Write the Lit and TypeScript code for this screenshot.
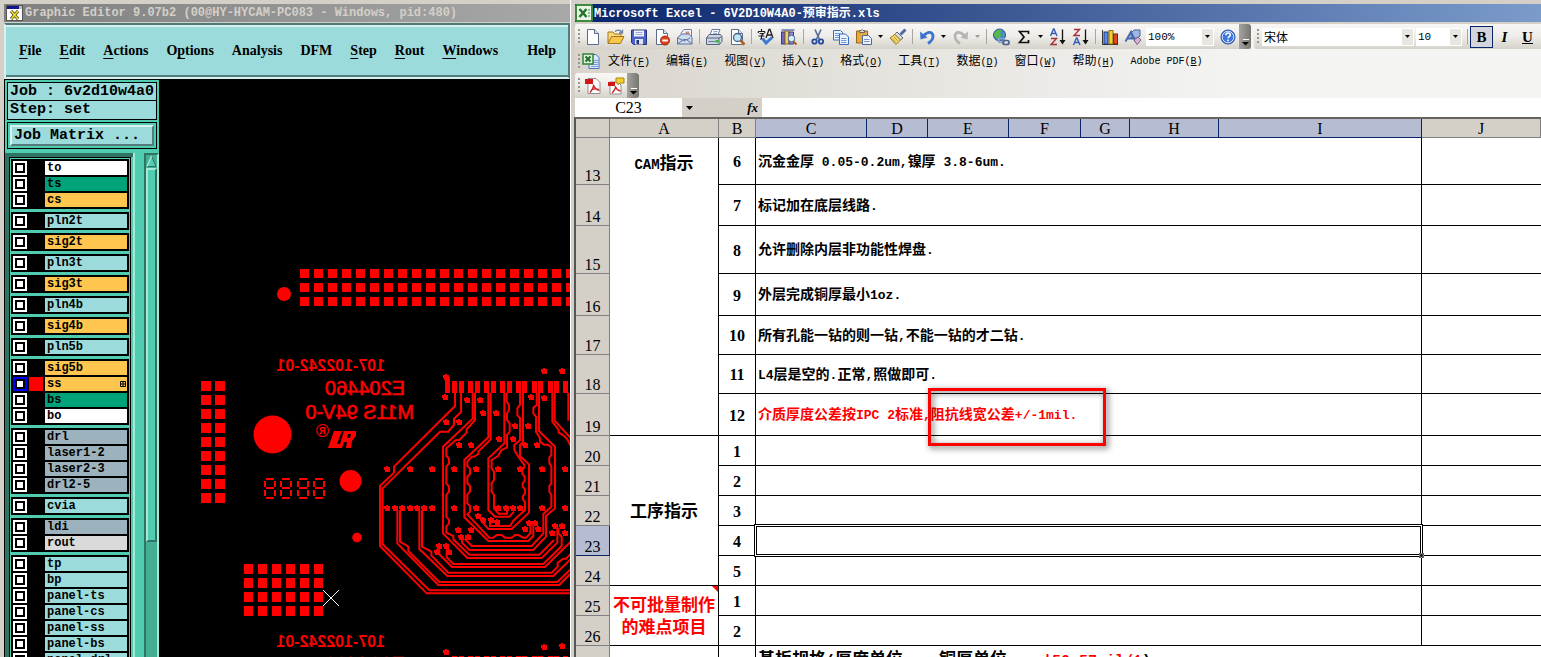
import { LitElement, html, svg, css } from "lit";
import { customElement } from "lit/decorators.js";
import { classMap } from "lit/directives/class-map.js";

/* Splits a string into CJK and Latin runs so each gets its own face and size. */
const mix = (text: string) =>
  (text.match(/[\u3000-\u9fff]+|[^\u3000-\u9fff]+/g) ?? []).map((run) =>
    /[\u3000-\u9fff]/.test(run)
      ? html`<span class="cj">${run}</span>`
      : html`<span class="la">${run}</span>`
  );

const icon = (body: unknown, size = 18) =>
  html`<svg width=${size} height=${size} viewBox="0 0 18 18" aria-hidden="true">${body}</svg>`;

const sheet = svg`<path d="M3.500 1.500h7l4 4v11h-11z" fill="#fff" stroke="#5b6b8c"/><path d="M10.500 1.500v4h4" fill="#dbe5f5" stroke="#5b6b8c"/>`;
const lens = svg`<path d="M12.500 12.500l4 4" stroke="#b0601c" stroke-width="2.500"/><circle cx="9.500" cy="9.500" r="4" fill="#bfe6f5" stroke="#4a6484" stroke-width="1.300"/>`;

const icons: Record<string, unknown> = {
  new: sheet,
  open: svg`<path d="M1 15V4h5l1.500 2H14v3" fill="#f9dc7a" stroke="#a5761c"/><path d="M1 15.500L4.500 8.500H17L13.500 15.500z" fill="#f7c64a" stroke="#a5761c"/><path d="M8 3.500q4-3 7 1M15.500 1.500v3.500h-3.500" fill="none" stroke="#6d7fa0" stroke-width="1.300"/>`,
  save: svg`<path d="M1.500 2h15v14.500h-13l-2-2z" fill="#4b62c8" stroke="#26317c"/><rect x="4" y="2.500" width="10" height="6" fill="#f2f4fb"/><path d="M5.500 4.500h7M5.500 6.500h7" stroke="#9aa9d8"/><rect x="5" y="11" width="8" height="5.500" fill="#dfe3ef"/><rect x="6.500" y="12" width="2.500" height="4" fill="#26317c"/>`,
  deny: svg`${sheet}<circle cx="12" cy="12.500" r="4.500" fill="#d8431f" stroke="#a52a10"/><rect x="9.300" y="11.500" width="5.500" height="2" fill="#fff"/>`,
  mail: svg`<path d="M4.500 6L8 1.500h7.500V10" fill="#f5f8ff" stroke="#6b7fa6"/><path d="M9.500 3.500h4v4h-4z" fill="#e08a70"/><path d="M1.500 9.500L6 6h7l3 3.500v6.500h-14.500z" fill="#cfdcf0" stroke="#5d74a0"/><path d="M1.500 16l6-4.500h3l5.500 4.500M2 10l6 3 6-3" fill="none" stroke="#5d74a0"/>`,
  print: svg`<path d="M5 7L7 1.500h8L13 7" fill="#fff" stroke="#66789c"/><path d="M8.500 3.500h4M8 5.300h4" stroke="#8fa0bf"/><path d="M1.500 10L4 6.500h11.500l1.500 2v5l-2.500 3h-13z" fill="#cdd5e2" stroke="#56657f"/><path d="M1.500 10h12.500l3-1.500M14 10v6" stroke="#56657f" fill="none"/><path d="M3.500 13.500h6.500" stroke="#6a7a93"/><rect x="10.500" y="12" width="3" height="2.500" fill="#27c02c"/>`,
  preview: svg`${sheet}${lens}`,
  spell: svg`<path d="M1 3.500h7M4.500 1v2M1.300 3.500V5M7.800 3.500V5M2.500 5.500h4L4.500 7.500V11H3M1.500 8h6" fill="none" stroke="#202020" stroke-width="1.200"/><path d="M9 10l3-8.500h1L16 10M10 7h5" fill="none" stroke="#202020" stroke-width="1.300"/><path d="M5.500 10.500l3.500 4.500 6-5.500" fill="none" stroke="#3b78d8" stroke-width="3"/>`,
  research: svg`<rect x="1.500" y="4" width="3.500" height="12" fill="#6d67c8" stroke="#3a3889"/><rect x="5" y="3" width="4" height="13" fill="#f2d165" stroke="#8c6d1e"/><path d="M9 4h4.500v12H9z" fill="#8e8fd8" stroke="#3a3889"/><path d="M1.500 2h13" stroke="#6775b5" stroke-width="1.500"/><path d="M13.500 13.500l3 3" stroke="#b0601c" stroke-width="2.200"/><circle cx="11.500" cy="10.500" r="3.300" fill="#d8effa" stroke="#4a6484"/>`,
  cut: svg`<path d="M6 1.500l4.500 10M12 1.500L7.500 11.500" stroke="#5b7196" stroke-width="1.700"/><circle cx="5.500" cy="13.500" r="2.200" fill="none" stroke="#24499c" stroke-width="1.800"/><circle cx="12" cy="13.500" r="2.200" fill="none" stroke="#24499c" stroke-width="1.800"/>`,
  copy: svg`<path d="M1.500 2.500h7l2 2V12h-9z" fill="#eaf3fd" stroke="#3d6cb4"/><path d="M3 5.500h5M3 7.500h5M3 9.500h5" stroke="#6c9ad8"/><path d="M7.500 6h6l3 3v7.500h-9z" fill="#eaf3fd" stroke="#3d6cb4"/><path d="M9 10.500h5.500M9 12.500h5.500M9 14.500h5.500" stroke="#6c9ad8"/>`,
  paste: svg`<path d="M1.500 3h11v12h-11z" fill="#e8a93c" stroke="#94651a"/><path d="M4.500 4.500V2.500h1.500q1-2 2 0h1.500v2z" fill="#d8d8d8" stroke="#666"/><path d="M7.500 7.500h6l3 3v6h-9z" fill="#eef3fb" stroke="#50669a"/><path d="M9 11.500h5.500M9 13.500h5.500" stroke="#7d95c5"/>`,
  painter: svg`<path d="M16.500 1.500l-5 5" stroke="#4e6aa8" stroke-width="3"/><path d="M8 4l6 6-2.500 2-6-5.500z" fill="#d6dbe8" stroke="#6d6d6d"/><path d="M6 6.500l5.500 5.500L7 16.500 1 10z" fill="#f6dc73" stroke="#9a7a23"/><path d="M3 10.500l4 4M5 9l4 4" stroke="#b59330"/>`,
  undo: svg`<path d="M5 8Q13 1 15 7.500 15.500 12 10 15.500" fill="none" stroke="#3e72cf" stroke-width="2.800"/><path d="M2 3.500l.5 8 7-2z" fill="#3e72cf"/>`,
  redo: svg`<path d="M13 8Q5 1 3 7.500 2.500 12 8 15.500" fill="none" stroke="#b5b5b5" stroke-width="2.800"/><path d="M16 3.500l-.5 8-7-2z" fill="#b5b5b5"/>`,
  link: svg`<circle cx="7.500" cy="7" r="6" fill="#3f86d0" stroke="#2c5796"/><path d="M3 4q3-3 6-2 1 2-1 3 2 2 0 4-2 3-3 2-1-3-3-3 0-3 1-4zM11 4q2 2 1.500 5l-2-2z" fill="#59b947"/><rect x="6.500" y="10.500" width="6" height="4" rx="2" fill="none" stroke="#90a5cb" stroke-width="1.700"/><rect x="11" y="12.500" width="6" height="4" rx="2" fill="none" stroke="#48628f" stroke-width="1.700"/>`,
  sum: svg`<path d="M13.500 6V3.500H4.500L9 9l-4.500 5.500h9V12" fill="none" stroke="#111" stroke-width="1.700"/>`,
  az: svg`<path d="M1.500 8L4.500 1h.5L8 8M2.500 5.500h4.500" fill="none" stroke="#355fb5" stroke-width="1.400"/><path d="M2 10.500h5.500L2 16.500h6" fill="none" stroke="#a5303a" stroke-width="1.400"/><path d="M13.500 1.500v13" stroke="#111" stroke-width="1.300"/><path d="M10.500 12h6l-3 4.500z" fill="#111"/>`,
  za: svg`<path d="M2 1.500h5.500L2 7.500h6" fill="none" stroke="#a5303a" stroke-width="1.400"/><path d="M1.500 17l3-7H5l3 7M2.500 14.500h4.500" fill="none" stroke="#355fb5" stroke-width="1.400"/><path d="M13.500 1.500v13" stroke="#111" stroke-width="1.300"/><path d="M10.500 12h6l-3 4.500z" fill="#111"/>`,
  chart: svg`<path d="M1.500 2v14.500H17" fill="none" stroke="#333"/><rect x="3" y="4" width="4" height="12" fill="#5b8be6" stroke="#1d377c"/><rect x="8" y="2.500" width="4" height="13.500" fill="#f4d02e" stroke="#8b7112"/><rect x="12.500" y="6" width="4" height="10" fill="#d94a27" stroke="#7d220d"/>`,
  draw: svg`<path d="M7 5l3-3h6v6l-3 2H7z" fill="#9fb9e4" stroke="#47639c"/><path d="M1.500 13.500L7 4l4.500 9.500M3.500 10.500H10" fill="none" stroke="#4668ae" stroke-width="2"/><path d="M10 12l4-3 3 3-4 4.500z" fill="#d6b4d4" stroke="#7b5a8d"/>`,
  help: svg`<circle cx="9" cy="9" r="7" fill="#3c77dd" stroke="#1c4aa3"/><circle cx="9" cy="9" r="5.800" fill="none" stroke="#d7e6ff"/><path d="M6.800 7.300q0-2.300 2.300-2.300 2.200 0 2.200 1.900 0 1-1.200 1.700-1 .6-1 1.600M9.100 11.500v1.700" fill="none" stroke="#fff" stroke-width="1.600"/>`,
  pdf: svg`<path d="M4 1.500h8l4 4v11H4z" fill="#fff" stroke="#8f8f8f"/><rect x="1" y="2" width="8" height="5" fill="#d21616"/><path d="M6 15.500q4-5 3.500-8M9.500 8q1 4 6 5.500M7 13q4-2 8-.5" fill="none" stroke="#c22" stroke-width="1.300"/>`,
  pdfmail: svg`<path d="M3 5h8l3 3v9H3z" fill="#fff" stroke="#8f8f8f"/><rect x="1" y="5" width="7" height="4" fill="#d21616"/><path d="M5 16q4-4 3.500-7M8.500 10q1 3 5 4" fill="none" stroke="#c22" stroke-width="1.300"/><path d="M9 1h8v5h-4l-2 2V6H9z" fill="#f6ce2c" stroke="#a8861a"/>`,
  excel: svg`<rect x="1" y="1" width="16" height="16" rx="1" fill="#e9f4e4" stroke="#3f8a3c" stroke-width="2"/><path d="M4.500 5l7 8M11.500 5l-7 8" stroke="#20732a" stroke-width="2.500"/><path d="M13 6h2M13 9h2M13 12h2" stroke="#3f8a3c"/>`,
  book: svg`<path d="M7 2.500h7l3 3v11H7z" fill="#dce9fb" stroke="#4c70b2"/><path d="M11 8.500h5M11 10.500h5M9 12.500h7M9 14.500h7" stroke="#7c9cd6"/><rect x="1" y="2" width="10" height="10" fill="#dff0da" stroke="#2f8437" stroke-width="1.500"/><path d="M3.500 4.500l5 5M8.500 4.500l-5 5" stroke="#1c7029" stroke-width="2"/>`,
  xwin: svg`<rect x="0.500" y="1.500" width="16" height="15" fill="#fff" stroke="#555"/><rect x="1" y="2" width="15" height="3" fill="#14148c"/><rect x="13" y="2" width="3" height="3" fill="#bbb"/><path d="M5 7l7 8M12 7l-7 8" stroke="#3c3c20" stroke-width="3"/><path d="M5 7l7 8M12 7l-7 8" stroke="#f1e221" stroke-width="1.700"/>`,
};

const layerGroups: [string, string][][] = [
  [["to", "white"], ["ts", "green"], ["cs", "gold"]],
  [["pln2t", "cyan"]],
  [["sig2t", "gold"]],
  [["pln3t", "cyan"]],
  [["sig3t", "gold"]],
  [["pln4b", "cyan"]],
  [["sig4b", "gold"]],
  [["pln5b", "cyan"]],
  [["sig5b", "gold"], ["ss", "gold"], ["bs", "green"], ["bo", "white"]],
  [["drl", "slate"], ["laser1-2", "slate"], ["laser2-3", "slate"], ["drl2-5", "slate"]],
  [["cvia", "cyan"]],
  [["ldi", "slate"], ["rout", "grey"]],
  [["tp", "cyan"], ["bp", "cyan"], ["panel-ts", "cyan"], ["panel-cs", "cyan"], ["panel-ss", "cyan"], ["panel-bs", "cyan"], ["panel-drl", "cyan"]],
];

const range = (n: number) => Array.from({ length: n }, (_, i) => i);

/* Board artwork: trace geometry is in thirds of a pixel. */
const traces = [
  "M255 128V168L72 350V368L30 408V588L170 730H600",
  "M273 128V186L252 206V225L234 245H210L38 415V583L178 721H600",
  "M82 480V580L205 705H568L600 672",
  "M90 480V575L115 590V603L208 696H562L602 658",
  "M148 480V597L232 678H550L602 628",
  "M156 480V590L184 605V616L235 668H545L563 650V638L580 626H588L602 612",
  "M208 590V613L246 651H525L602 575",
  "M230 590V622L250 642H520L575 588V560L565 550V535",
  "M308 128V206L219 290V550L292 624H515L562 578V530",
  "M315 128V210L290 238V248L268 270H258L240 285L229 295V318L237 326V340L229 350V400L237 410V425L229 435V500L237 510V520L229 530V548L250 558V568L298 614H508L552 570",
  "M355 128V262L283 330V502L355 573H475L490 558V522",
  "M362 128V268L325 305V312L312 320H305L292 335V348L300 355V372L292 380V400L300 408V425L292 433V460L300 468V485L292 493L358 563H370L380 555H395L405 563H425L435 555H445L460 563H468L481 550V522",
  "M403 128V280L355 325V480L375 500H418L432 485",
  "M410 128V155L417 165V180L411 190V210L419 220V245L411 255V292L395 300L384 318L365 330V355L372 365V390L365 400V425L372 435V475L386 491H411V478",
  "M450 128V165L442 175V195L450 205V270L433 285V300L445 320L463 345V352L457 360V372L464 380V392L458 400V410L465 418V430L459 438V448L465 456V480L430 512L420 528H360V516",
  "M459 128V275L450 285V318L477 343V488L425 537H355L332 510",
  "M500 128V165L490 173V190L498 200V245L510 265V275L522 284H534L544 292V315L538 322V340L544 348V400L538 408V425L544 435V470L520 492V550L485 588H305L284 566",
  "M507 128V243L555 290V475L528 498V560L490 600H298L276 578V560",
  "M547 128V215L566 240V248L580 256L592 268L602 288",
  "M554 128V212L602 264",
  "M595 128V212",
];
const pads = [246, 267, 294, 315, 342, 363, 390, 410, 438, 457, 486, 504, 534, 552, 579];
const vias: [number, number][] = [
  [523, 64], [577, 64], [229, 80], [226, 142], [292, 151], [331, 151], [340, 188], [379, 190], [484, 142], [523, 143],
  [229, 217], [268, 217], [436, 229], [475, 229], [387, 268], [430, 268], [268, 284], [304, 284], [466, 286], [502, 286],
  ...[52, 120, 187, 253, 319, 385, 451, 517, 585].map((x): [number, number] => [x, 358]),
  ...[52, 76, 97, 120, 142, 163, 187, 253, 319, 385, 409, 430, 451, 517, 585].map((x): [number, number] => [x, 475]),
  [325, 499], [340, 511], [362, 511], [382, 516], [476, 520], [496, 520], [466, 538], [505, 538], [265, 541], [304, 541],
  [274, 560], [295, 560], [208, 587], [229, 587], [200, 607], [238, 607], [556, 529], [577, 529], [547, 550], [586, 550],
  [523, 891], [577, 889], [229, 907],
];

const base = css`
  * { box-sizing: border-box; }
  button, input, select { font: inherit; color: inherit; margin: 0; padding: 0; border: 0; border-radius: 0; background: none; outline: 0; }
  svg { display: block; flex: none; }
`;

@customElement("board-canvas")
class BoardCanvas extends LitElement {
  static styles = [base, css`
    :host { display: block; background: #000; overflow: hidden; min-width: 0; }
    svg { width: 100%; height: 100%; }
    text { font-family: "Liberation Sans", sans-serif; fill: #f00; }
    .part { font-size: 16px; font-weight: 700; }
    .code { font-size: 20px; stroke: #f00; stroke-width: 0.6; }
    .reg { font-size: 18px; font-weight: 700; }
    .trace { fill: none; stroke: #f00; stroke-width: 6; }
    .crisp { shape-rendering: crispEdges; }
  `];

  render() {
    const sq = (x: number, y: number, w = 9, h = 9) => svg`<rect x=${x} y=${y} width=${w} height=${h}/>`;
    return html`<svg aria-label="Board artwork">
      <g transform="translate(-159 -80)" fill="#f00">
        ${range(3).map((r) => range(20).map((c) => sq(300 + c * 14, 269 + r * 14)))}
        ${range(9).map((r) => range(2).map((c) => sq(201 + c * 14, 381 + r * 14, 10, 10)))}
        ${range(4).map((r) => range(6).map((c) => sq(244 + c * 14, 564 + r * 14, 9, 10)))}
        <circle cx="284" cy="294" r="7"/><circle cx="272.500" cy="434.500" r="19"/>
        <circle cx="350.500" cy="481" r="11"/><circle cx="357" cy="537.500" r="4.800"/>
        <g transform="translate(385 0) scale(-1 1)">
          <text class="part" x="0" y="371">107-102242-01</text>
          <text class="part" x="0" y="647">107-102242-01</text>
        </g>
        <g transform="translate(405 0) scale(-1 1)">
          <text class="code" x="0" y="395">E204460</text>
          <text class="code" x="0" y="671">E204460</text>
          <text class="code" x="-9" y="419">M11S 94V-0</text>
          <text class="reg" x="76" y="437">®</text>
        </g>
        <path fill-rule="evenodd" d="M334 431H342L337 444H340L344 431H356V436L352 441L351 448H346L347 442L344 442L342 448H328ZM348 434L347 438H350L351 434Z"/>
        <g class="crisp">
          ${[264, 280, 297, 313].map((x) => svg`
            <path d=${`M${x + 2} 478h8v2h-8zM${x + 2} 487h8v2h-8zM${x + 2} 497h8v2h-8zM${x} 481h2v6h-2zM${x} 490h2v6h-2zM${x + 10} 481h2v6h-2zM${x + 10} 490h2v6h-2z`}/>`)}
        </g>
        <g transform="translate(370 350) scale(0.33333)">
          ${traces.map((d) => svg`<path class="trace" d=${d}/>`)}
          <g class="crisp">
            <rect x="225" y="80" width="15" height="48"/>
            ${pads.map((x) => svg`<rect x=${x} y="94" width="15" height="35"/><rect x=${x} y="918" width="15" height="15"/>`)}
            ${vias.map(([x, y]) => svg`<path d=${`M${x - 9} ${y - 6}h6v-3h6v3h6v15h-15v-6h-3z`}/>`)}
          </g>
        </g>
        <path d="M323 590L339 606M339 590L323 606" stroke="#fff"/>
      </g>
    </svg>`;
  }
}

@customElement("graphic-editor")
class GraphicEditor extends LitElement {
  static styles = [base, css`
    :host { display: flex; flex-direction: column; min-width: 0; min-height: 0; padding: 4px 0 0 4px; background: #d4d0c8; overflow: hidden; }
    .title { display: flex; align-items: center; gap: 1px; height: 19px; flex: none; padding-left: 2px; background: linear-gradient(90deg, #808080, #a8a8a8); color: #d4d0c8; font: 700 12px/18px "Liberation Mono", monospace; white-space: pre; overflow: hidden; border-bottom: 1px solid #d4d0c8; }
    .menus { display: flex; align-items: center; gap: 18px; height: 56px; flex: none; padding: 0 12px 0 13px; background: #9cdbdb; border: 2px solid; border-color: #4f7a7a #557c7c #d8f2f2 #d8f2f2; box-shadow: inset 0 2px #d8f2f2, inset 0 -2px #557c7c; font: 700 14px/20px "Liberation Serif", serif; color: #000; }
    .menus button { line-height: 16px; }
    .menus u { text-underline-offset: 3px; }
    .help { margin-left: auto; }
    .body { display: grid; grid-template-columns: 155px 1fr; flex: 1; min-height: 0; border-top: 1px solid #000; background: #000; }
    .side { display: flex; flex-direction: column; gap: 2px; padding: 2px 2px 0 2px; background: #50cdb0; min-height: 0; border-left: 1px solid #000; overflow: hidden; font: 15px/17px "Liberation Mono", monospace; }
    .info { background: #9cdbdb; border: 1px solid #000; padding: 0 2px; white-space: pre; font-weight: 700; height: 20px; flex: none; }
    .info + .info { margin-top: -4px; }
    .matrix { border: 1px solid #000; padding: 2px; flex: none; }
    .matrix button { display: block; width: 100%; height: 21px; text-align: left; padding-left: 2px; background: #9cdbdb; border: 2px solid; border-color: #d8f2f2 #557c7c #557c7c #d8f2f2; font-weight: 700; }
    .lists { display: flex; flex: 1; min-height: 0; margin: 2px -2px 0; overflow: hidden; }
    .frame { width: 128px; flex: none; padding: 0 1px 0 0; border: solid #2f7462; border-width: 4px 0 0 4px; overflow: hidden; }
    .layers { display: flex; flex-direction: column; gap: 3px; border: 1px solid #000; padding: 1px; width: 122px; margin: 0; }
    .group { display: flex; flex-direction: column; gap: 2px; background: #000; padding: 2px; }
    .layer { display: grid; grid-template-columns: 14px 14px 1fr; gap: 2px; height: 14px; font: 700 12px/14px "Liberation Mono", monospace; color: #000; }
    .layer input { appearance: none; width: 14px; height: 14px; background: #fff; border: 2px solid #fff; display: block; box-shadow: inset 0 0 0 2px #000; }
    .layer.active input { border-color: #00f; }
    .swatch { background: #000; }
    .active .swatch { background: #f00; }
    .name { text-align: left; padding-left: 2px; display: flex; justify-content: space-between; align-items: center; overflow: hidden; white-space: pre; }
    .white { background: #fff; } .green { background: #00a27a; } .gold { background: #fec64e; }
    .cyan { background: #9cdbdb; } .slate { background: #9cb3bd; } .grey { background: #dadada; }
    .rail { width: 10px; border-left: 2px solid #a8e8d6; flex: none; }
    .scroll { display: flex; flex-direction: column; width: 15px; border: solid; border-width: 2px 2px 0 2px; border-color: #2f7462 #a8e8d6 #2f7462 #2f7462; background: #44ae94; margin-left: auto; }
    .thumb { height: 374px; flex: none; background: #50cdb0; border: 2px solid; border-color: #a8e8d6 #2f7462 #2f7462 #a8e8d6; }
  `];

  render() {
    const menus = ["File", "Edit", "Actions", "Options", "Analysis", "DFM", "Step", "Rout", "Windows"];
    const key: Record<string, number> = { Options: 1, Analysis: -1, DFM: -1 };
    return html`
      <div class="title">${icon(icons.xwin)}<span>Graphic Editor 9.07b2 (00@HY-HYCAM-PC083 - Windows, pid:480)</span></div>
      <nav class="menus">
        ${menus.map((m) => {
          const k = key[m] ?? 0;
          return html`<button>${k < 0 ? m : html`${m.slice(0, k)}<u>${m[k]}</u>${m.slice(k + 1)}`}</button>`;
        })}
        <button class="help">Help</button>
      </nav>
      <div class="body">
        <div class="side">
          <div class="info">Job : 6v2d10w4a0</div>
          <div class="info">Step: set</div>
          <div class="matrix"><button>Job Matrix ...</button></div>
          <div class="lists">
            <div class="frame"><div class="layers">
              ${layerGroups.map((g) => html`<div class="group">${g.map(([n, tone]) => html`
                <div class=${classMap({ layer: true, active: n === "ss" })}>
                  <input type="checkbox" id=${n} aria-label=${n}><span class="swatch"></span>
                  <button class="name ${tone}">${n}${n === "ss" ? html`<svg width="7" height="7" viewBox="0 0 7 7"><path d="M.5 .5h5v5h-5zM3 .5v5M.5 3h5" fill="none" stroke="#000"/></svg>` : ""}</button>
                </div>`)}</div>`)}
            </div></div>
            <div class="rail"></div>
            <div class="scroll">
              <svg width="11" height="13" viewBox="0 0 11 13"><path d="M5.500 1L1 11.500h9z" fill="#50cdb0" stroke="#2f7462"/><path d="M5.500 1L1 11.500" stroke="#a8e8d6" stroke-width="1.500"/></svg>
              <div class="thumb"></div>
            </div>
          </div>
        </div>
        <board-canvas></board-canvas>
      </div>`;
  }
}

interface Row { n: number; h: number; b: string; text?: string; red?: boolean; }
const rows: Row[] = [
  { n: 13, h: 47, b: "6", text: "沉金金厚 0.05-0.2um,镍厚 3.8-6um." },
  { n: 14, h: 41, b: "7", text: "标记加在底层线路." },
  { n: 15, h: 48, b: "8", text: "允许删除内层非功能性焊盘." },
  { n: 16, h: 42, b: "9", text: "外层完成铜厚最小1oz." },
  { n: 17, h: 39, b: "10", text: "所有孔能一钻的则一钻,不能一钻的才二钻." },
  { n: 18, h: 39, b: "11", text: "L4层是空的.正常,照做即可." },
  { n: 19, h: 42, b: "12", text: "介质厚度公差按IPC 2标准,阻抗线宽公差+/-1mil.", red: true },
  { n: 20, h: 30, b: "1" }, { n: 21, h: 30, b: "2" }, { n: 22, h: 30, b: "3" }, { n: 23, h: 30, b: "4" }, { n: 24, h: 30, b: "5" },
  { n: 25, h: 30, b: "1" }, { n: 26, h: 30, b: "2" },
];
const cols: [string, number][] = [["A", 109], ["B", 37], ["C", 111], ["D", 61], ["E", 81], ["F", 72], ["G", 49], ["H", 89], ["I", 203], ["J", 0]];

@customElement("sheet-window")
class SheetWindow extends LitElement {
  static styles = [base, css`
    :host { display: flex; flex-direction: column; min-width: 0; min-height: 0; overflow: hidden; padding: 4px 0 0 4px; background: #d4d0c8; border-left: 1px solid #fff; color: #000; }
    .cj { font-family: "Noto Sans CJK SC", sans-serif; }
    .la { font-family: "Liberation Mono", monospace; white-space: pre; }
    .title { display: flex; align-items: center; gap: 1px; height: 20px; flex: none; background: linear-gradient(90deg, #0a246a, #7b9bcb); color: #fff; font: 700 12px/18px "Liberation Mono", monospace; white-space: pre; border-bottom: 2px solid #d4d0c8; }
    .title .cj { font-size: 12px; line-height: 16px; }
    .bars { background: linear-gradient(90deg, #d9d5cd, #f4f4f2 70%); flex: none; font-size: 12px; }
    .line { display: flex; height: 25px; overflow: hidden; margin-top: 0; }
    .strip { display: flex; align-items: center; flex: none; background: linear-gradient(#f8f7f5, #eeece8 50%, #d5d2ca); border-radius: 3px 0 0 3px; }
    .rest { flex: 1; margin-left: 3px; }
    .grip { width: 2px; height: 15px; margin: 0 1px 0 3px; flex: none; background: repeating-linear-gradient(#9a968e 0 2px, transparent 2px 4px); }
    .tool { width: 23px; height: 23px; display: grid; place-items: center; flex: none; }
    .drop { width: 11px; height: 23px; display: grid; place-items: center; flex: none; }
    .sep { width: 6px; height: 15px; flex: none; background: linear-gradient(#aaa69e, #aaa69e) 3px 0 / 1px 100% no-repeat; }
    .cap { width: 12px; align-self: stretch; background: linear-gradient(90deg, #a5a39f, #77756f); border-radius: 0 3px 3px 0; display: grid; place-items: end center; padding-bottom: 3px; }
    .combo { display: flex; align-items: center; height: 18px; background: #fff; margin-right: 2px; font: 11px/16px "Liberation Mono", monospace; }
    .combo select { appearance: none; flex: 1; min-width: 0; height: 16px; padding-left: 2px; }
    .combo .drop { height: 16px; background: #e8e6e1; margin-right: 1px; }
    .zoom { width: 68px; margin-left: 2px; } .size { width: 46px; } .face { width: 152px; margin-left: 2px; font: 12px/16px "Noto Sans CJK SC", sans-serif; }
    .fmt { width: 23px; height: 22px; font: 700 15px/18px "Liberation Serif", serif; display: grid; place-items: center; }
    .on { background: #d4d5dc; border: 1px solid #0a246a; }
    .menus { display: flex; align-items: center; height: 24px; }
    .menus button { padding: 0 8px; height: 20px; white-space: nowrap; line-height: 18px; }
    .menus .cj { font-size: 12px; } .menus .la { font-size: 10px; }
    .menus .tool { padding: 0; width: 19px; margin-right: 0; }
    .fx { display: grid; grid-template-columns: 107px 80px 1fr; height: 19px; flex: none; font: 16px/19px "Liberation Serif", serif; }
    .fx input { background: #fff; height: 19px; min-width: 0; }
    .fx .ref { text-align: center; }
    .fx .mid { display: flex; align-items: center; justify-content: space-between; padding: 0 4px; }
    .fx i { font: italic 700 13px/16px "Liberation Serif", serif; }
    .area { flex: 1; min-height: 0; overflow: hidden; background: #fff; border: solid #555; border-width: 2px 0 0 2px; border-top-color: #66645f; margin-left: -1px; }
    table { table-layout: fixed; width: 100%; border-collapse: separate; border-spacing: 0; }
    th { padding: 0; background: #d4d0c8; border: solid #808080; border-width: 0 1px 1px 0; font: 16px/16px "Liberation Serif", serif; vertical-align: bottom; }
    thead th { height: 19px; vertical-align: middle; padding-top: 2px; }
    th.sel { background: #b6bdd2; border-color: #0a246a; }
    td { padding: 0 0 0 2px; border: solid #000; border-width: 0 1px 1px 0; vertical-align: middle; font-weight: 700; white-space: nowrap; }
    td.last { border-right: 0; }
    .num { text-align: center; padding: 2px 0 0; font: 700 16px/18px "Liberation Serif", serif; }
    .text { position: relative; line-height: 18px; }
    .text .cj { font-size: 14px; } .text .la { font-size: 13px; }
    .red { color: #f00; }
    .side { position: relative; text-align: center; padding: 0; line-height: 20px; }
    .side .cj { display: inline-block; font-size: 17px; line-height: 20px; } .side .la { font-size: 14px; }
    .side.top { vertical-align: top; padding-top: 14px; }
    .corner::before { content: ""; position: absolute; top: 0; right: 0; border: solid transparent; border-width: 0 0 6px 6px; border-right: 0; border-top: 6px solid #f00; border-bottom: 0; }
    .cursor::after { content: ""; position: absolute; inset: -2px; border: 1px solid #000; box-shadow: inset 0 0 0 1px #fff, inset 0 0 0 2px #000; z-index: 1; }
    .cursor svg { position: absolute; right: -3px; bottom: -3px; z-index: 2; }
    .mark { position: absolute; left: 172px; top: -6px; width: 178px; height: 58px; border: 3px solid #f00; filter: drop-shadow(2px 2px 3px rgba(0, 0, 0, 0.65)); z-index: 3; }
    .cut { border-color: transparent; padding-top: 2px; vertical-align: top; line-height: 20px; }
    .cut .cj { font-size: 17px; } .cut .la { font-size: 15px; }
  `];

  tool(name: string) { return html`<button class="tool" aria-label=${name}>${icon(icons[name])}</button>`; }
  tri(tone = "#000") { return html`<svg width="5" height="3" viewBox="0 0 5 3"><path d="M0 0h5L2.500 3z" fill=${tone}/></svg>`; }
  drop(tone?: string) { return html`<button class="drop" aria-label="More">${this.tri(tone)}</button>`; }
  cap() { return html`<div class="cap"><svg width="7" height="7" viewBox="0 0 7 7"><path d="M1 .5h6" stroke="#fff"/><path d="M0 3h7L3.500 6.500z" fill="#000"/></svg></div>`; }
  sep() { return html`<span class="sep"></span>`; }
  combo(kind: string, value: string) {
    return html`<span class="combo ${kind}"><select aria-label=${kind}><option>${value}</option></select><span class="drop">${this.tri()}</span></span>`;
  }

  side(n: number) {
    if (n === 13) return html`<td class="side top" rowspan="7">${mix("CAM指示")}</td>`;
    if (n === 20) return html`<td class="side" rowspan="5">${mix("工序指示")}</td>`;
    if (n === 25) return html`<td class="side red corner" rowspan="2">${mix("不可批量制作")}<br>${mix("的难点项目")}</td>`;
    return "";
  }

  render() {
    const t = (n: string) => this.tool(n);
    const menus = ["文件(F)", "编辑(E)", "视图(V)", "插入(I)", "格式(O)", "工具(T)", "数据(D)", "窗口(W)", "帮助(H)", "Adobe PDF(B)"];
    return html`
      <div class="title">${icon(icons.excel)}<span>${mix("Microsoft Excel - 6V2D10W4A0-预审指示.xls")}</span></div>
      <div class="bars">
        <div class="line">
          <div class="strip"><span class="grip"></span>
            ${["new", "open", "save", "deny", "mail"].map(t)}${this.sep()}
            ${["print", "preview"].map(t)}${this.sep()}
            ${["spell", "research"].map(t)}${this.sep()}
            ${["cut", "copy", "paste"].map(t)}${this.drop()}${t("painter")}${this.sep()}
            ${t("undo")}${this.drop()}${t("redo")}${this.drop("#999")}${this.sep()}
            ${["link", "sum"].map(t)}${this.drop()}${["az", "za"].map(t)}${this.sep()}
            ${["chart", "draw"].map(t)}${this.combo("zoom", "100%")}${t("help")}${this.cap()}
          </div>
          <div class="strip rest"><span class="grip"></span>
            ${this.combo("face", "宋体")}${this.combo("size", "10")}${this.sep()}
            <button class="fmt on">B</button><button class="fmt"><i>I</i></button><button class="fmt"><u>U</u></button>
          </div>
        </div>
        <nav class="menus"><span class="grip"></span>${t("book")}
          ${menus.map((m) => {
            const [, name, k] = m.match(/(.*)\((.)\)/)!;
            return html`<button>${mix(name)}<span class="la">(<u>${k}</u>)</span></button>`;
          })}
        </nav>
        <div class="line"><div class="strip"><span class="grip"></span>${t("pdf")}${t("pdfmail")}<span></span>${this.cap()}</div></div>
      </div>
      <div class="fx">
        <input class="ref" aria-label="Name box" value="C23">
        <div class="mid"><svg width="7" height="4" viewBox="0 0 7 4"><path d="M0 0h7L3.500 4z"/></svg><i>fx</i></div>
        <input aria-label="Formula">
      </div>
      <div class="area"><table>
        <colgroup><col width="34">${cols.map(([, w]) => (w ? html`<col width=${w}>` : html`<col>`))}</colgroup>
        <thead><tr><th></th>${cols.map(([c]) => html`<th class=${c >= "C" && c <= "I" ? "sel" : ""}>${c}</th>`)}</tr></thead>
        <tbody>
          ${rows.map((r) => html`<tr height=${r.h}>
            <th class=${r.n === 23 ? "sel" : ""}>${r.n}</th>
            ${this.side(r.n)}
            <td class="num">${r.b}</td>
            <td colspan="7" class=${classMap({ text: true, red: !!r.red, cursor: r.n === 23 })}>
              ${r.text ? html`<div>${mix(r.text)}</div>` : ""}
              ${r.red ? html`<span class="mark"></span>` : ""}
              ${r.n === 23 ? html`<svg width="5" height="5" viewBox="0 0 5 5"><path d="M0 0h5v5H0z" fill="#fff"/><path d="M1 0v5M4 0v5M0 1h5M0 4h5M2.500 1v3M1 2.500h3"  stroke="#000" stroke-width=".8"/></svg>` : ""}
            </td>
            <td class="last"></td>
          </tr>`)}
          <tr height="34"><th></th><td></td><td></td>
            <td class="cut" colspan="8">${mix("基板规格(厚度单位:   铜厚单位:   ")}<span class="red">${mix("|50~57mil/1")}</span>${mix(")")}</td></tr>
        </tbody>
      </table></div>`;
  }
}

@customElement("app-root")
class AppRoot extends LitElement {
  static styles = [base, css`
    :host { display: grid; grid-template-columns: 570fr 971fr; grid-template-rows: 100%; height: 100vh; overflow: hidden; background: #d4d0c8; }
  `];
  render() {
    return html`<graphic-editor></graphic-editor><sheet-window></sheet-window>`;
  }
}
